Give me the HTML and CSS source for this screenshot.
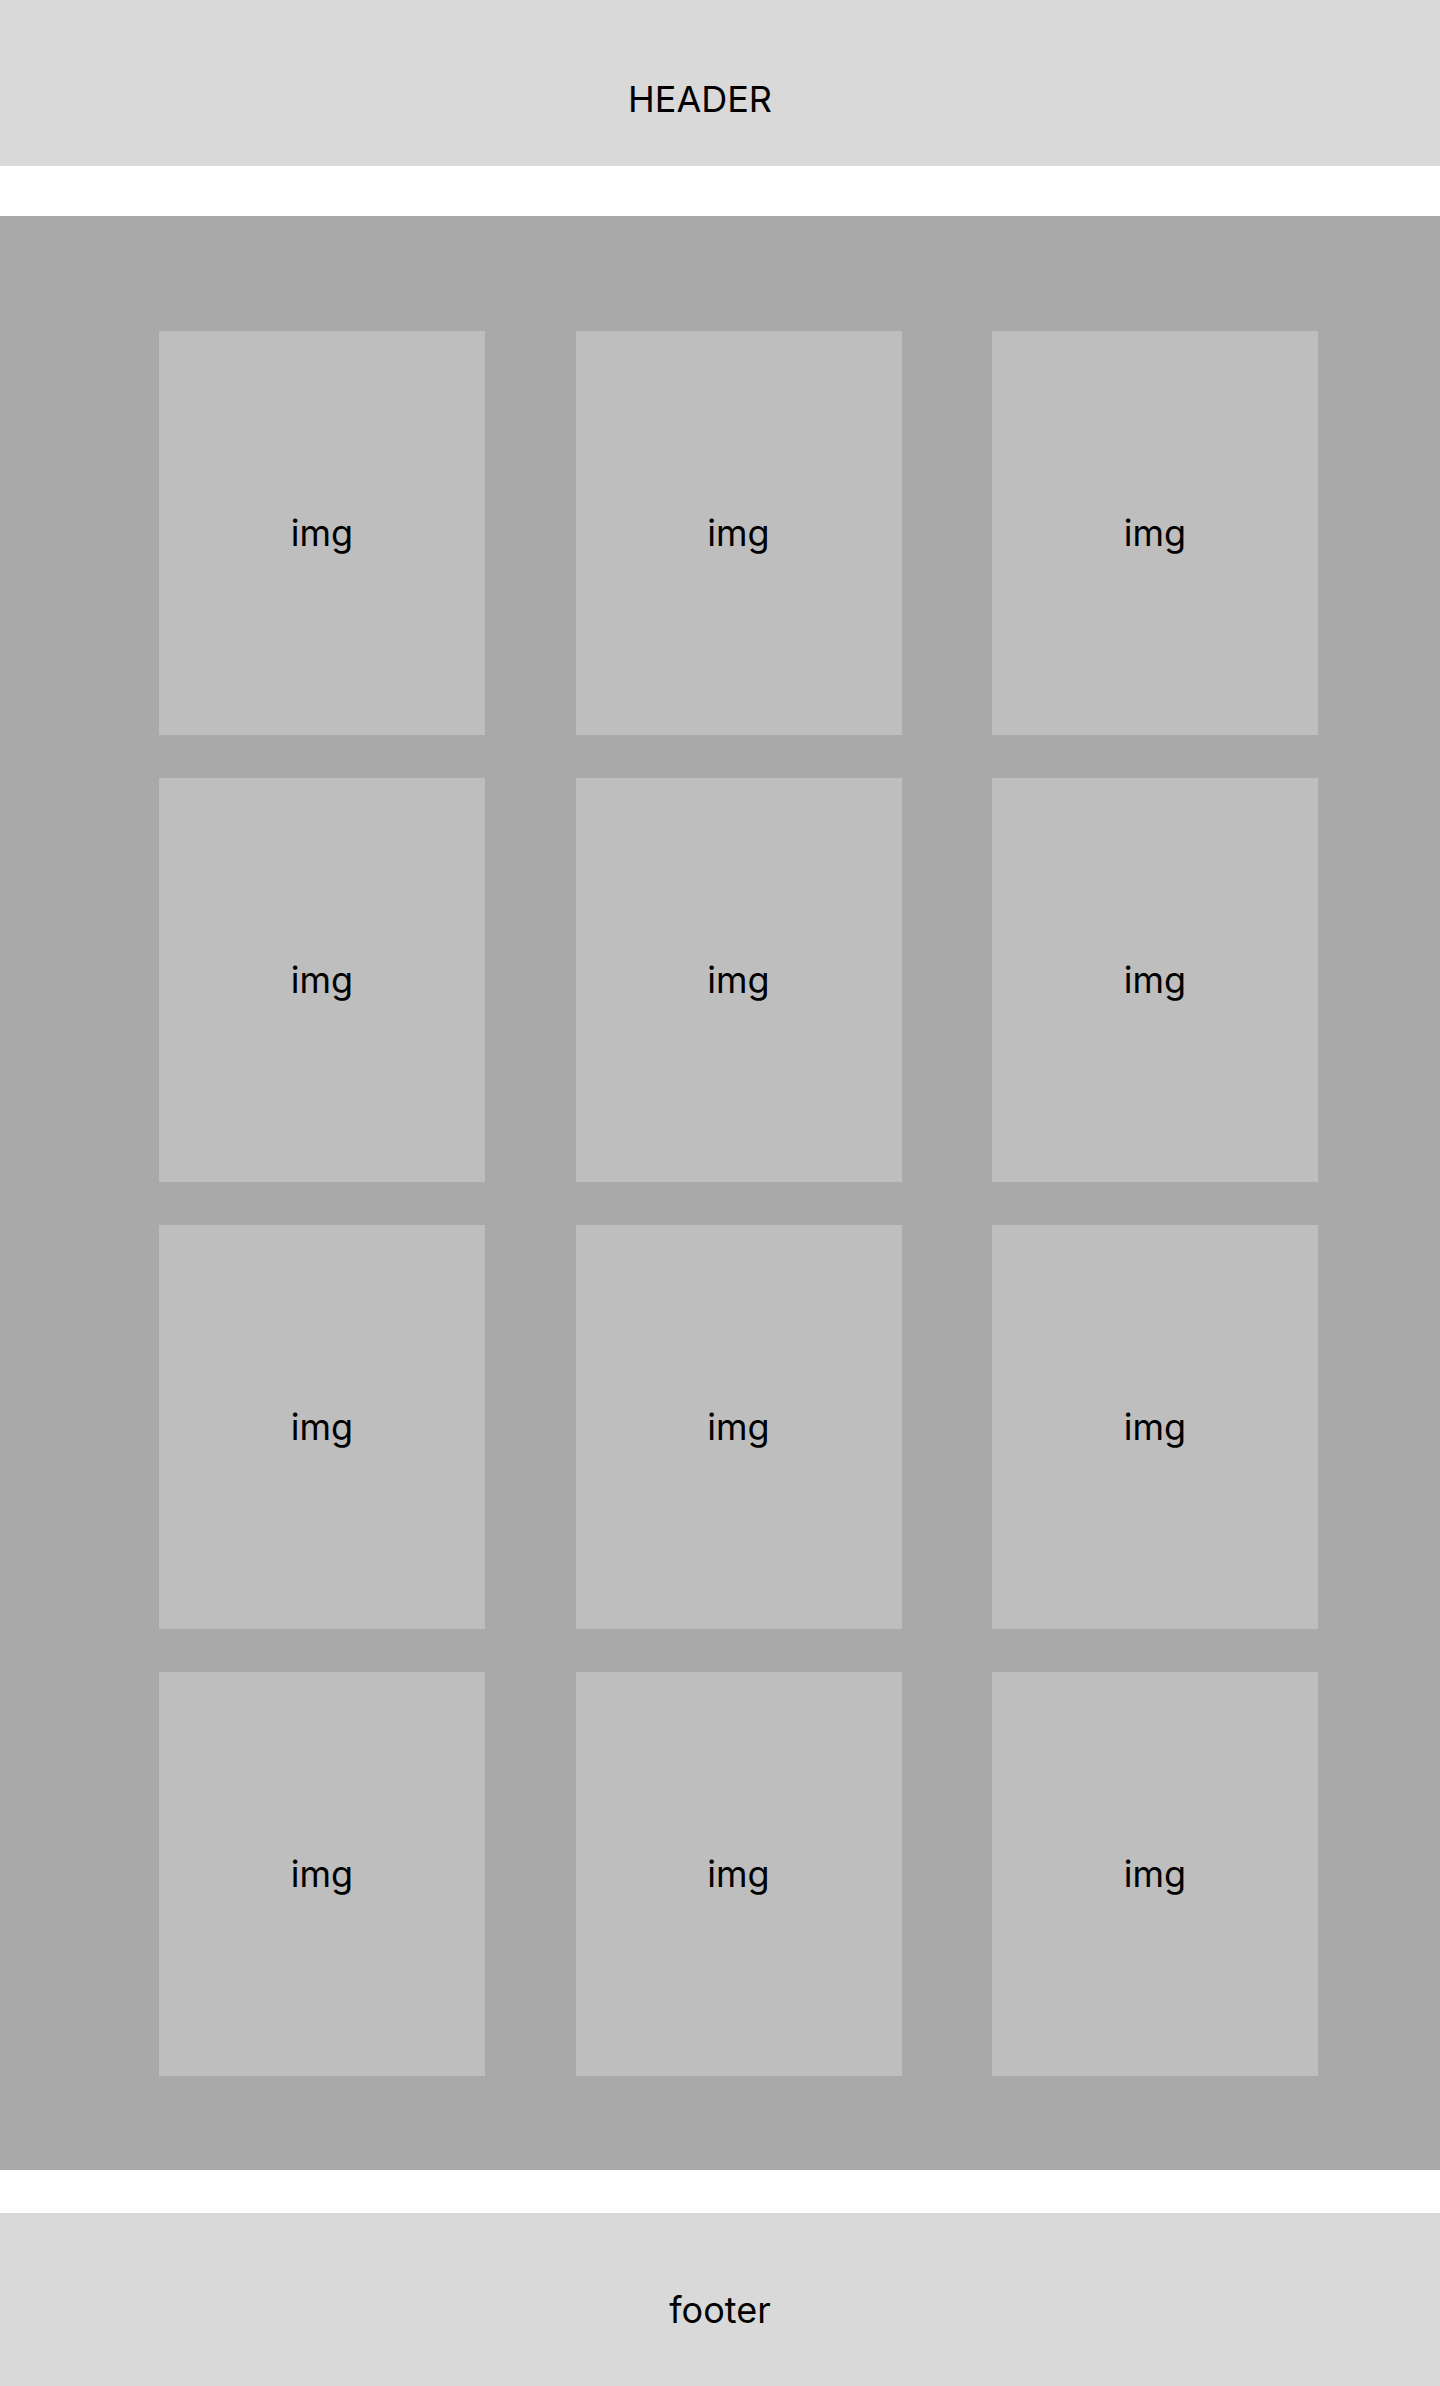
FILE: index.html
```html
<!DOCTYPE html>
<html lang="en">
<head>
    <meta charset="UTF-8">
    <meta name="viewport" content="width=device-width, initial-scale=1.0">
    <title>Gallery</title>
    <link rel="stylesheet" href="styles.css">
</head>
<body>
    <header class="header">HEADER</header>

    <main class="gallery">
        <div class="card">img</div>
        <div class="card">img</div>
        <div class="card">img</div>
        <div class="card">img</div>
        <div class="card">img</div>
        <div class="card">img</div>
        <div class="card">img</div>
        <div class="card">img</div>
        <div class="card">img</div>
        <div class="card">img</div>
        <div class="card">img</div>
        <div class="card">img</div>
    </main>

    <footer class="footer">footer</footer>
</body>
</html>
```

FILE: styles.css
```css
* {
    margin: 0;
    padding: 0;
    box-sizing: border-box;
}

body {
    background-color: white;
    color: black;
    font-family: 'Inter', 'Noto Sans', sans-serif;
    font-size: 36px;
}

.header {
    height: 166px;
    padding: 77px 40px 0 0;
    margin-bottom: 50px;
    background-color: #d9d9d9;
    text-align: center;
}

.gallery {
    display: grid;
    grid-template-columns: repeat(3, 326px);
    grid-auto-rows: 404px;
    justify-content: space-between;
    row-gap: 43px;
    padding: 115px 122px 94px 159px;
    background-color: #a9a9a9;
}

.card {
    display: flex;
    align-items: center;
    justify-content: center;
    background-color: #bebebe;
}

.footer {
    height: 173px;
    padding-top: 75px;
    margin-top: 43px;
    background-color: #d9d9d9;
    text-align: center;
}
```
